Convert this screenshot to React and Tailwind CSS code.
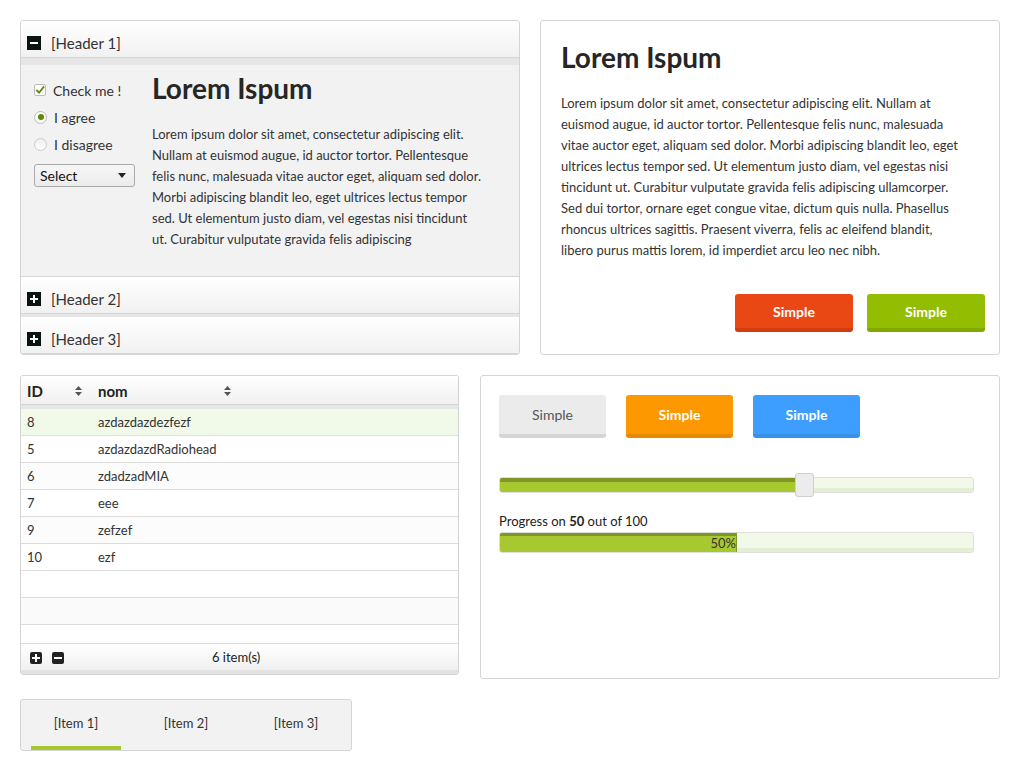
import React from 'react'

const font = { fontFamily: 'Lato, "Open Sans", sans-serif' }

function Square({ sign }) {
  return (
    <span className="w-[14px] h-[14px] bg-[#0a1410] flex items-center justify-center">
      {sign === '-' ? (
        <span className="w-[8px] h-[2px] bg-white" />
      ) : (
        <span className="relative w-[8px] h-[8px] flex items-center justify-center">
          <span className="absolute w-[8px] h-[2px] bg-white" />
          <span className="absolute w-[2px] h-[8px] bg-white" />
        </span>
      )}
    </span>
  )
}

function AccHeader({ label, sign, strip }) {
  return (
    <>
      <div className="h-[36px] pt-[8px] flex items-center gap-[10px] px-[6px] bg-gradient-to-b from-white to-[#f1f1f1] text-[15px] text-[#333]">
        <Square sign={sign} />
        <span>{label}</span>
      </div>
      <div className={`${strip} border-t border-[#d6d6d6] bg-[#e6e6e6]`} />
    </>
  )
}

function SortIcon() {
  return (
    <svg width="7" height="10" viewBox="0 0 7 10">
      <path d="M3.5 0 L7 4 L0 4 Z" fill="#555" />
      <path d="M0 6 L7 6 L3.5 10 Z" fill="#555" />
    </svg>
  )
}

function Btn({ label, cls, w, h }) {
  return (
    <button className={`${cls} ${w} ${h} rounded-[3px] text-[14px] font-bold`}>{label}</button>
  )
}

const rows = [
  ['8', 'azdazdazdezfezf'],
  ['5', 'azdazdazdRadiohead'],
  ['6', 'zdadzadMIA'],
  ['7', 'eee'],
  ['9', 'zefzef'],
  ['10', 'ezf'],
]

export default function App() {
  return (
    <div className="w-[1021px] h-[771px] bg-white pl-[20px] pt-[20px] text-[#333]" style={font}>
      {/* row 1 */}
      <div className="flex gap-[20px]">
        {/* Accordion */}
        <div className="w-[500px] h-[335px] border border-[#d4d4d4] rounded-[3px] overflow-hidden flex flex-col">
          <AccHeader label="[Header 1]" sign="-" strip="h-[8px]" />
          <div className="h-[211px] bg-[#f2f2f2] flex">
            <div className="w-[131px] pl-[13px] pt-[15px] text-[14px] flex flex-col">
              <div className="flex items-center gap-[7px] h-[20px]">
                <span className="w-[12px] h-[12px] border border-[#bbb] rounded-[2px] bg-white flex items-center justify-center">
                  <svg width="11" height="10" viewBox="0 0 11 10">
                    <path d="M1.5 5 L4.5 8 L10 1" stroke="#5b8a00" strokeWidth="2" fill="none" />
                  </svg>
                </span>
                <span>Check me !</span>
              </div>
              <div className="flex items-center gap-[7px] h-[20px] mt-[7px]">
                <span className="w-[13px] h-[13px] border border-[#bbb] rounded-full bg-white flex items-center justify-center">
                  <span className="w-[6px] h-[6px] rounded-full bg-[#5b8a00]" />
                </span>
                <span>I agree</span>
              </div>
              <div className="flex items-center gap-[7px] h-[20px] mt-[7px]">
                <span className="w-[13px] h-[13px] border border-[#ccc] rounded-full bg-gradient-to-b from-[#eee] to-white" />
                <span>I disagree</span>
              </div>
              <div className="mt-[10px] w-[101px] h-[23px] border border-[#aaa] rounded-[3px] bg-gradient-to-b from-[#f6f6f6] to-[#ececec] flex items-center justify-between pl-[5px] pr-[8px]">
                <span className="text-[14px] text-[#111]">Select</span>
                <svg width="8" height="5" viewBox="0 0 8 5"><path d="M0 0 L8 0 L4 5 Z" fill="#222" /></svg>
              </div>
            </div>
            <div className="pt-[7px]">
              <h1 className="text-[28px] font-bold leading-[32px] text-[#262626]">Lorem Ispum</h1>
              <p className="mt-[20px] text-[13px] leading-[21px] text-[#333] whitespace-nowrap">
                Lorem ipsum dolor sit amet, consectetur adipiscing elit.<br />
                Nullam at euismod augue, id auctor tortor. Pellentesque<br />
                felis nunc, malesuada vitae auctor eget, aliquam sed dolor.<br />
                Morbi adipiscing blandit leo, eget ultrices lectus tempor<br />
                sed. Ut elementum justo diam, vel egestas nisi tincidunt<br />
                ut. Curabitur vulputate gravida felis adipiscing
              </p>
            </div>
          </div>
          <div className="border-t border-[#d6d6d6]" />
          <AccHeader label="[Header 2]" sign="+" strip="h-[4px]" />
          <AccHeader label="[Header 3]" sign="+" strip="h-[1px]" />
        </div>

        {/* Text card */}
        <div className="w-[460px] h-[335px] border border-[#d4d4d4] rounded-[3px] bg-white px-[20px] pt-[19px] flex flex-col">
          <h1 className="text-[28px] font-bold leading-[34px] text-[#262626]">Lorem Ispum</h1>
          <p className="mt-[19px] text-[13px] leading-[21px] whitespace-nowrap">
            Lorem ipsum dolor sit amet, consectetur adipiscing elit. Nullam at<br />
            euismod augue, id auctor tortor. Pellentesque felis nunc, malesuada<br />
            vitae auctor eget, aliquam sed dolor. Morbi adipiscing blandit leo, eget<br />
            ultrices lectus tempor sed. Ut elementum justo diam, vel egestas nisi<br />
            tincidunt ut. Curabitur vulputate gravida felis adipiscing ullamcorper.<br />
            Sed dui tortor, ornare eget congue vitae, dictum quis nulla. Phasellus<br />
            rhoncus ultrices sagittis. Praesent viverra, felis ac eleifend blandit,<br />
            libero purus mattis lorem, id imperdiet arcu leo nec nibh.
          </p>
          <div className="mt-[33px] flex justify-end gap-[14px] mr-[-6px]">
            <Btn label="Simple" w="w-[118px]" h="h-[38px]" cls="bg-[#e94815] text-white border-b-[4px] border-[#d13c10]" />
            <Btn label="Simple" w="w-[118px]" h="h-[38px]" cls="bg-[#93bd00] text-white border-b-[4px] border-[#82a800]" />
          </div>
        </div>
      </div>

      {/* row 2 */}
      <div className="flex gap-[21px] mt-[20px] items-start">
        {/* Table */}
        <div className="w-[439px] h-[300px] border border-[#d4d4d4] rounded-[3px] overflow-hidden flex flex-col bg-white">
          <div className="h-[28px] pt-[2px] flex items-center bg-gradient-to-b from-white to-[#f1f1f1] text-[15px] font-bold text-[#222]">
            <div className="w-[77px] pl-[6px] pr-[16px] flex items-center justify-between">
              <span>ID</span>
              <SortIcon />
            </div>
            <div className="w-[137px] pr-[4px] flex items-center justify-between">
              <span>nom</span>
              <SortIcon />
            </div>
          </div>
          <div className="h-[5px] border-t border-[#d6d6d6] bg-[#e6e6e6]" />
          {rows.map((r, i) => (
            <div
              key={r[0]}
              className={`h-[27px] pt-[2px] flex items-center text-[13px] border-b border-[#dcdcdc] ${i === 0 ? 'bg-[#f1f9e9]' : i % 2 === 1 ? 'bg-white' : 'bg-[#fcfcfc]'}`}
            >
              <span className="w-[77px] pl-[6px]">{r[0]}</span>
              <span>{r[1]}</span>
            </div>
          ))}
          <div className="h-[27px] border-b border-[#dcdcdc] bg-white" />
          <div className="h-[27px] border-b border-[#dcdcdc] bg-[#fafafa]" />
          <div className="h-[19px] border-b border-[#dcdcdc] bg-white" />
          <div className="flex-1 flex items-center pt-[2px] bg-gradient-to-b from-white to-[#f0f0f0] border-b-[4px] border-[#e2e2e2] relative">
            <div className="flex gap-[10px] pl-[9px]">
              {['+', '-'].map(s => (
                <span key={s} className="w-[12px] h-[12px] rounded-[2px] bg-[#222] relative flex items-center justify-center">
                  <span className="absolute w-[8px] h-[2px] bg-white" />
                  {s === '+' && <span className="absolute w-[2px] h-[8px] bg-white" />}
                </span>
              ))}
            </div>
            <span className="absolute left-[191px] text-[13px] text-[#222]">6 item(s)</span>
          </div>
        </div>

        {/* Controls */}
        <div className="w-[520px] h-[304px] border border-[#d4d4d4] rounded-[3px] bg-white px-[18px] pt-[19px]">
          <div className="flex gap-[20px]">
            <Btn label="Simple" w="w-[107px]" h="h-[43px]" cls="bg-[#ebebeb] text-[#555] font-normal border-b-[4px] border-[#d5d5d5]" />
            <Btn label="Simple" w="w-[107px]" h="h-[43px]" cls="bg-[#fd9800] text-white border-b-[4px] border-[#e88a00]" />
            <Btn label="Simple" w="w-[107px]" h="h-[43px]" cls="bg-[#3d9eff] text-white border-b-[4px] border-[#3690ee]" />
          </div>

          {/* slider */}
          <div className="relative mt-[39px] w-[475px] h-[16px]">
            <div className="absolute inset-0 border border-[#dedede] rounded-[3px] bg-[#f2f9e9] overflow-hidden">
              <div className="absolute bottom-0 left-0 right-0 h-[4px] bg-[#e3efd4]" />
              <div className="absolute top-0 bottom-0 left-0 w-[300px] bg-[#a8c82f] border-t-[4px] border-[#7e9726]" />
            </div>
            <div className="absolute left-[296px] top-[-4px] w-[19px] h-[24px] rounded-[3px] border border-[#cfcfcf] bg-[#ececec]" />
          </div>

          <div className="mt-[19px] text-[13px] text-[#222] leading-[18px]">
            Progress on <b>50</b> out of 100
          </div>
          <div className="relative mt-[2px] w-[475px] h-[21px] border border-[#dedede] rounded-[3px] bg-[#f2f9e9] overflow-hidden">
            <div className="absolute bottom-0 left-0 right-0 h-[4px] bg-[#e3efd4]" />
            <div className="absolute top-0 bottom-0 left-0 w-[237px] bg-[#a8c82f] border-t-[3px] border-r border-[#7e9726] flex items-center justify-end">
              <span className="text-[13px] text-[#333] leading-none mt-[-1px]">50%</span>
            </div>
          </div>
        </div>
      </div>

      {/* Tabs */}
      <div className="mt-[20px] w-[332px] h-[52px] border border-[#d4d4d4] rounded-[3px] bg-[#f2f2f2] flex gap-[20px] px-[10px] text-[13px] text-[#333]">
        {['[Item 1]', '[Item 2]', '[Item 3]'].map((t, i) => (
          <div key={t} className="w-[90px] flex flex-col">
            <div className="flex-1 flex items-center justify-center pt-[2px]">
              <span>{t}</span>
            </div>
            <div className={`h-[4px] w-[90px] ${i === 0 ? 'bg-[#a8c82f]' : ''}`} />
          </div>
        ))}
      </div>
    </div>
  )
}
